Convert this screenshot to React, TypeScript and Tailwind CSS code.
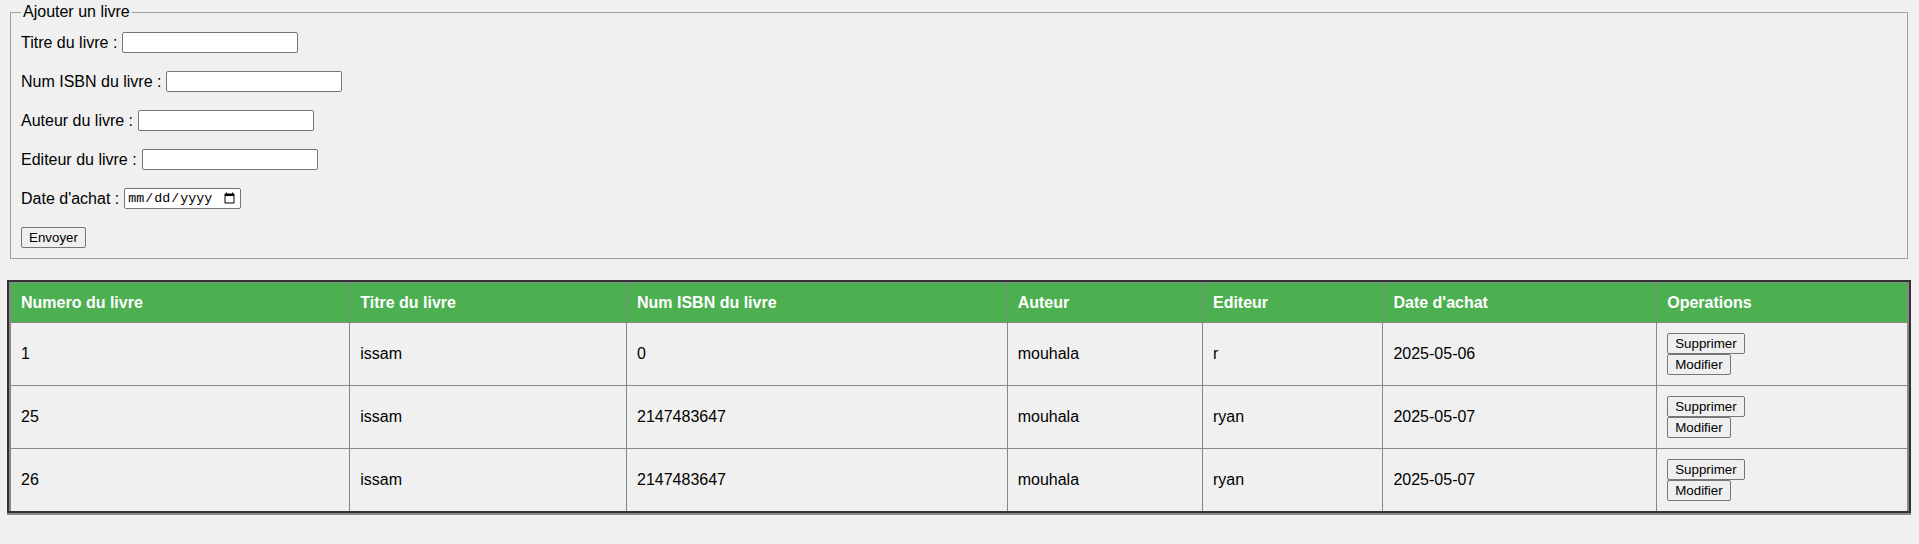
const livres = [
  { id: '1', titre: 'issam', isbn: '0', auteur: 'mouhala', editeur: 'r', date: '2025-05-06' },
  { id: '25', titre: 'issam', isbn: '2147483647', auteur: 'mouhala', editeur: 'ryan', date: '2025-05-07' },
  { id: '26', titre: 'issam', isbn: '2147483647', auteur: 'mouhala', editeur: 'ryan', date: '2025-05-07' },
];

const colonnes = ['Numero du livre', 'Titre du livre', 'Num ISBN du livre', 'Auteur', 'Editeur', "Date d'achat", 'Operations'];

const champs = ['Titre du livre :', 'Num ISBN du livre :', 'Auteur du livre :', 'Editeur du livre :'];

function Bouton({ children, block }: { children: string; block?: boolean }) {
  return (
    <button
      type="button"
      className={
        (block ? 'block ' : '') +
        "h-[21px] rounded-[2px] border border-[#767676] bg-[#efefef] px-[7px] py-[2px] font-['Liberation_Sans',Arial,sans-serif] text-[13.33px] leading-[15px] text-black"
      }
    >
      {children}
    </button>
  );
}

export default function App() {
  return (
    <div className="min-h-screen bg-[#f0f0f0] pl-[7px] pr-[8px] pt-[3px] font-['Liberation_Sans',Arial,sans-serif] text-[16px] leading-[18px] text-black">
      <fieldset className="ml-[3px] mr-[3px] border border-[#a0a0a0] pl-[10px] pr-[10px] pt-[11px] pb-[10px]">
        <legend className="px-[2px] leading-[18px]">Ajouter un livre</legend>
        <div className="flex flex-col gap-[18px]">
          {champs.map((c) => (
            <div key={c} className="flex h-[21px] items-center gap-[5px]">
              <span>{c}</span>
              <input type="text" className="h-[21px] w-[176px] rounded-[2px] border border-[#767676] bg-white px-[2px] text-[13.33px]" />
            </div>
          ))}
          <div className="flex h-[21px] items-center gap-[5px]">
            <span>Date d'achat :</span>
            <input
              type="date"
              className="h-[21px] w-[117px] rounded-[2px] border border-[#767676] bg-white px-[2px] font-['Liberation_Mono',monospace] text-[13.33px] leading-[15px]"
            />
          </div>
          <div className="flex h-[21px] items-center">
            <Bouton>Envoyer</Bouton>
          </div>
        </div>
      </fieldset>

      <div className="mt-[21px] border-2 border-[#333] shadow-[0_2px_0_#888]">
        <table className="w-full border-collapse">
          <thead>
            <tr className="bg-[#4caf50] text-white">
              {colonnes.map((c, i) => (
                <th
                  key={c}
                  className={
                    'border border-[#888] p-[10px] text-left font-bold leading-[19px] ' +
                    (i === 0 ? 'border-l-2 ' : '') +
                    (i === colonnes.length - 1 ? 'border-r-2' : '')
                  }
                >
                  {c}
                </th>
              ))}
            </tr>
          </thead>
          <tbody>
            {livres.map((l, r) => {
              const last = r === livres.length - 1;
              const cell = 'border border-[#888] p-[10px] align-middle ' + (last ? 'border-b-0 ' : '');
              return (
                <tr key={l.id}>
                  <td className={cell + 'border-l-2'}>{l.id}</td>
                  <td className={cell}>{l.titre}</td>
                  <td className={cell}>{l.isbn}</td>
                  <td className={cell}>{l.auteur}</td>
                  <td className={cell}>{l.editeur}</td>
                  <td className={cell}>{l.date}</td>
                  <td className={cell + 'border-r-2'}>
                    <Bouton block>Supprimer</Bouton>
                    <Bouton block>Modifier</Bouton>
                  </td>
                </tr>
              );
            })}
          </tbody>
        </table>
      </div>
    </div>
  );
}
